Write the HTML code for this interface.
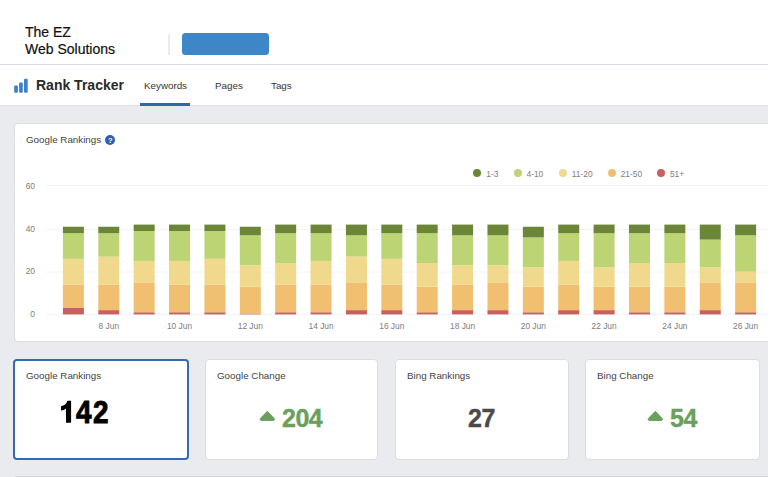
<!DOCTYPE html>
<html><head><meta charset="utf-8">
<style>
*{margin:0;padding:0;box-sizing:border-box}
html,body{width:774px;height:477px;overflow:hidden;background:#fff;font-family:"Liberation Sans",sans-serif}
.abs{position:absolute}
#gray{left:0;top:105px;width:768px;height:372px;background:#eaebee;border-top:1px solid #dfe0e4}
.logo{left:25px;top:24px;font-size:14px;line-height:16.8px;color:#111;-webkit-text-stroke:0.2px #111}
.vdiv{left:168.3px;top:34px;width:1.6px;height:21px;background:#ebebed}
.btn{left:182px;top:33px;width:87px;height:22px;border-radius:3.5px;background:#3d87c9}
.hline{left:0;top:64px;width:768px;height:1px;background:#d9dce3}
.rt{left:36px;top:76px;font-size:14px;font-weight:bold;color:#2a2a2a;line-height:18px}
.tab{top:80px;font-size:9.8px;color:#333;line-height:12px}
.uline{left:140px;top:103px;width:50px;height:3px;background:#2f66b3}
.card{background:#fff;border:1px solid #dcdde1;border-radius:4px}
.ct{font-size:9.8px;color:#444;line-height:12px}
.help{width:10px;height:10px;border-radius:50%;background:#2b61b0;color:#fff;font-size:7.5px;font-weight:bold;line-height:11.5px;text-align:center}
.stat{top:358.5px;height:101.5px}
.sel{border:2px solid #3569b1}
.ax{font-size:8.4px;line-height:10px;color:#7d7d7d;white-space:nowrap}
.dot{width:8px;height:8px;border-radius:50%}
.num{font-weight:bold;line-height:1;-webkit-text-stroke:0.4px currentColor}
</style></head><body>
<div class="abs" id="gray"></div>
<div class="abs logo">The EZ<br>Web Solutions</div>
<div class="abs vdiv"></div>
<div class="abs btn"></div>
<div class="abs hline"></div>

<svg class="abs" style="left:0;top:0" width="40" height="100">
<rect x="14.2" y="85.6" width="3.7" height="7.1" rx="1" fill="#3b82c8"/>
<rect x="19.1" y="82.4" width="3.7" height="10.3" rx="1" fill="#3b82c8"/>
<rect x="24" y="78.8" width="3.7" height="13.9" rx="1" fill="#3b82c8"/>
</svg>
<div class="abs rt">Rank Tracker</div>
<div class="abs tab" style="left:144px">Keywords</div>
<div class="abs tab" style="left:215px">Pages</div>
<div class="abs tab" style="left:271px">Tags</div>
<div class="abs uline"></div>

<div class="abs" style="left:0;top:0;width:768px;height:477px;overflow:hidden"><div class="abs card" style="left:14px;top:123px;width:780px;height:219px"></div></div>
<div class="abs ct" style="left:26px;top:134px">Google Rankings</div>
<div class="abs help" style="left:105.2px;top:135.2px">?</div>

<svg class="abs" id="chart" style="left:0;top:0" width="774" height="477">
<line x1="46" y1="185.50" x2="768" y2="185.50" stroke="#f4f4f4" stroke-width="1"/>
<line x1="46" y1="229.50" x2="768" y2="229.50" stroke="#f4f4f4" stroke-width="1"/>
<line x1="46" y1="272.00" x2="768" y2="272.00" stroke="#f4f4f4" stroke-width="1"/>
<line x1="46" y1="314.50" x2="768" y2="314.50" stroke="#f4f4f4" stroke-width="1"/>
<rect x="62.90" y="307.99" width="21" height="6.41" fill="#c95f5f"/>
<rect x="62.90" y="284.47" width="21" height="23.52" fill="#f0c070"/>
<rect x="62.90" y="258.81" width="21" height="25.66" fill="#f0d98c"/>
<rect x="62.90" y="233.16" width="21" height="25.66" fill="#bcd474"/>
<rect x="62.90" y="226.74" width="21" height="6.41" fill="#6b8636"/>
<rect x="98.28" y="310.12" width="21" height="4.28" fill="#c95f5f"/>
<rect x="98.28" y="284.47" width="21" height="25.66" fill="#f0c070"/>
<rect x="98.28" y="256.67" width="21" height="27.79" fill="#f0d98c"/>
<rect x="98.28" y="233.16" width="21" height="23.52" fill="#bcd474"/>
<rect x="98.28" y="226.74" width="21" height="6.41" fill="#6b8636"/>
<rect x="133.66" y="312.26" width="21" height="2.14" fill="#c95f5f"/>
<rect x="133.66" y="282.33" width="21" height="29.93" fill="#f0c070"/>
<rect x="133.66" y="260.95" width="21" height="21.38" fill="#f0d98c"/>
<rect x="133.66" y="231.02" width="21" height="29.93" fill="#bcd474"/>
<rect x="133.66" y="224.60" width="21" height="6.41" fill="#6b8636"/>
<rect x="169.04" y="312.26" width="21" height="2.14" fill="#c95f5f"/>
<rect x="169.04" y="284.47" width="21" height="27.79" fill="#f0c070"/>
<rect x="169.04" y="260.95" width="21" height="23.52" fill="#f0d98c"/>
<rect x="169.04" y="231.02" width="21" height="29.93" fill="#bcd474"/>
<rect x="169.04" y="224.60" width="21" height="6.41" fill="#6b8636"/>
<rect x="204.42" y="312.26" width="21" height="2.14" fill="#c95f5f"/>
<rect x="204.42" y="284.47" width="21" height="27.79" fill="#f0c070"/>
<rect x="204.42" y="258.81" width="21" height="25.66" fill="#f0d98c"/>
<rect x="204.42" y="231.02" width="21" height="27.79" fill="#bcd474"/>
<rect x="204.42" y="224.60" width="21" height="6.41" fill="#6b8636"/>
<rect x="239.80" y="313.54" width="21" height="0.86" fill="#c95f5f"/>
<rect x="239.80" y="286.61" width="21" height="26.94" fill="#f0c070"/>
<rect x="239.80" y="265.23" width="21" height="21.38" fill="#f0d98c"/>
<rect x="239.80" y="235.29" width="21" height="29.93" fill="#bcd474"/>
<rect x="239.80" y="226.74" width="21" height="8.55" fill="#6b8636"/>
<rect x="275.18" y="312.26" width="21" height="2.14" fill="#c95f5f"/>
<rect x="275.18" y="284.47" width="21" height="27.79" fill="#f0c070"/>
<rect x="275.18" y="263.09" width="21" height="21.38" fill="#f0d98c"/>
<rect x="275.18" y="233.16" width="21" height="29.93" fill="#bcd474"/>
<rect x="275.18" y="224.60" width="21" height="8.55" fill="#6b8636"/>
<rect x="310.56" y="312.26" width="21" height="2.14" fill="#c95f5f"/>
<rect x="310.56" y="284.47" width="21" height="27.79" fill="#f0c070"/>
<rect x="310.56" y="260.95" width="21" height="23.52" fill="#f0d98c"/>
<rect x="310.56" y="233.16" width="21" height="27.79" fill="#bcd474"/>
<rect x="310.56" y="224.60" width="21" height="8.55" fill="#6b8636"/>
<rect x="345.94" y="310.12" width="21" height="4.28" fill="#c95f5f"/>
<rect x="345.94" y="282.33" width="21" height="27.79" fill="#f0c070"/>
<rect x="345.94" y="256.67" width="21" height="25.66" fill="#f0d98c"/>
<rect x="345.94" y="235.29" width="21" height="21.38" fill="#bcd474"/>
<rect x="345.94" y="224.60" width="21" height="10.69" fill="#6b8636"/>
<rect x="381.32" y="310.12" width="21" height="4.28" fill="#c95f5f"/>
<rect x="381.32" y="284.47" width="21" height="25.66" fill="#f0c070"/>
<rect x="381.32" y="258.81" width="21" height="25.66" fill="#f0d98c"/>
<rect x="381.32" y="233.16" width="21" height="25.66" fill="#bcd474"/>
<rect x="381.32" y="224.60" width="21" height="8.55" fill="#6b8636"/>
<rect x="416.70" y="312.26" width="21" height="2.14" fill="#c95f5f"/>
<rect x="416.70" y="286.61" width="21" height="25.66" fill="#f0c070"/>
<rect x="416.70" y="263.09" width="21" height="23.52" fill="#f0d98c"/>
<rect x="416.70" y="233.16" width="21" height="29.93" fill="#bcd474"/>
<rect x="416.70" y="224.60" width="21" height="8.55" fill="#6b8636"/>
<rect x="452.08" y="310.12" width="21" height="4.28" fill="#c95f5f"/>
<rect x="452.08" y="284.47" width="21" height="25.66" fill="#f0c070"/>
<rect x="452.08" y="265.23" width="21" height="19.24" fill="#f0d98c"/>
<rect x="452.08" y="235.29" width="21" height="29.93" fill="#bcd474"/>
<rect x="452.08" y="224.60" width="21" height="10.69" fill="#6b8636"/>
<rect x="487.46" y="310.12" width="21" height="4.28" fill="#c95f5f"/>
<rect x="487.46" y="282.33" width="21" height="27.79" fill="#f0c070"/>
<rect x="487.46" y="265.23" width="21" height="17.10" fill="#f0d98c"/>
<rect x="487.46" y="235.29" width="21" height="29.93" fill="#bcd474"/>
<rect x="487.46" y="224.60" width="21" height="10.69" fill="#6b8636"/>
<rect x="522.84" y="312.26" width="21" height="2.14" fill="#c95f5f"/>
<rect x="522.84" y="286.61" width="21" height="25.66" fill="#f0c070"/>
<rect x="522.84" y="267.36" width="21" height="19.24" fill="#f0d98c"/>
<rect x="522.84" y="237.43" width="21" height="29.93" fill="#bcd474"/>
<rect x="522.84" y="226.74" width="21" height="10.69" fill="#6b8636"/>
<rect x="558.22" y="310.12" width="21" height="4.28" fill="#c95f5f"/>
<rect x="558.22" y="284.47" width="21" height="25.66" fill="#f0c070"/>
<rect x="558.22" y="260.95" width="21" height="23.52" fill="#f0d98c"/>
<rect x="558.22" y="233.16" width="21" height="27.79" fill="#bcd474"/>
<rect x="558.22" y="224.60" width="21" height="8.55" fill="#6b8636"/>
<rect x="593.60" y="310.12" width="21" height="4.28" fill="#c95f5f"/>
<rect x="593.60" y="286.61" width="21" height="23.52" fill="#f0c070"/>
<rect x="593.60" y="267.36" width="21" height="19.24" fill="#f0d98c"/>
<rect x="593.60" y="233.16" width="21" height="34.21" fill="#bcd474"/>
<rect x="593.60" y="224.60" width="21" height="8.55" fill="#6b8636"/>
<rect x="628.98" y="312.26" width="21" height="2.14" fill="#c95f5f"/>
<rect x="628.98" y="286.61" width="21" height="25.66" fill="#f0c070"/>
<rect x="628.98" y="263.09" width="21" height="23.52" fill="#f0d98c"/>
<rect x="628.98" y="233.16" width="21" height="29.93" fill="#bcd474"/>
<rect x="628.98" y="224.60" width="21" height="8.55" fill="#6b8636"/>
<rect x="664.36" y="312.26" width="21" height="2.14" fill="#c95f5f"/>
<rect x="664.36" y="286.61" width="21" height="25.66" fill="#f0c070"/>
<rect x="664.36" y="263.09" width="21" height="23.52" fill="#f0d98c"/>
<rect x="664.36" y="233.16" width="21" height="29.93" fill="#bcd474"/>
<rect x="664.36" y="224.60" width="21" height="8.55" fill="#6b8636"/>
<rect x="699.74" y="310.12" width="21" height="4.28" fill="#c95f5f"/>
<rect x="699.74" y="282.33" width="21" height="27.79" fill="#f0c070"/>
<rect x="699.74" y="267.36" width="21" height="14.97" fill="#f0d98c"/>
<rect x="699.74" y="239.57" width="21" height="27.79" fill="#bcd474"/>
<rect x="699.74" y="224.60" width="21" height="14.97" fill="#6b8636"/>
<rect x="735.12" y="312.26" width="21" height="2.14" fill="#c95f5f"/>
<rect x="735.12" y="282.33" width="21" height="29.93" fill="#f0c070"/>
<rect x="735.12" y="271.64" width="21" height="10.69" fill="#f0d98c"/>
<rect x="735.12" y="235.29" width="21" height="36.35" fill="#bcd474"/>
<rect x="735.12" y="224.60" width="21" height="10.69" fill="#6b8636"/>

</svg>

<div class="abs ax" style="left:0;width:35px;text-align:right;top:180.7px">60</div>
<div class="abs ax" style="left:0;width:35px;text-align:right;top:223.6px">40</div>
<div class="abs ax" style="left:0;width:35px;text-align:right;top:266.4px">20</div>
<div class="abs ax" style="left:0;width:35px;text-align:right;top:309.3px">0</div>
<div class="abs ax" style="left:78.8px;width:60px;text-align:center;top:321px">8 Jun</div>
<div class="abs ax" style="left:149.5px;width:60px;text-align:center;top:321px">10 Jun</div>
<div class="abs ax" style="left:220.3px;width:60px;text-align:center;top:321px">12 Jun</div>
<div class="abs ax" style="left:291.1px;width:60px;text-align:center;top:321px">14 Jun</div>
<div class="abs ax" style="left:361.8px;width:60px;text-align:center;top:321px">16 Jun</div>
<div class="abs ax" style="left:432.6px;width:60px;text-align:center;top:321px">18 Jun</div>
<div class="abs ax" style="left:503.3px;width:60px;text-align:center;top:321px">20 Jun</div>
<div class="abs ax" style="left:574.1px;width:60px;text-align:center;top:321px">22 Jun</div>
<div class="abs ax" style="left:644.9px;width:60px;text-align:center;top:321px">24 Jun</div>
<div class="abs ax" style="left:715.6px;width:60px;text-align:center;top:321px">26 Jun</div>
<div class="abs dot" style="left:473.3px;top:169px;background:#6b8636"></div>
<div class="abs ax" style="left:486.3px;top:169px">1-3</div>
<div class="abs dot" style="left:513.5px;top:169px;background:#bcd474"></div>
<div class="abs ax" style="left:526.5px;top:169px">4-10</div>
<div class="abs dot" style="left:558.8px;top:169px;background:#f0d98c"></div>
<div class="abs ax" style="left:571.8px;top:169px">11-20</div>
<div class="abs dot" style="left:607.7px;top:169px;background:#f0c070"></div>
<div class="abs ax" style="left:620.7px;top:169px">21-50</div>
<div class="abs dot" style="left:656.9px;top:169px;background:#c95f5f"></div>
<div class="abs ax" style="left:669.9px;top:169px">51+</div>
<div class="abs card stat sel" style="left:13px;width:175.5px"></div>
<div class="abs card stat" style="left:204.5px;width:173.5px"></div>
<div class="abs card stat" style="left:394.5px;width:174px"></div>
<div class="abs card stat" style="left:584.5px;width:175px"></div>
<div class="abs" style="left:15px;top:476px;width:753px;height:1px;background:#d5d6da"></div>

<div class="abs ct" style="left:26px;top:369.5px">Google Rankings</div>
<div class="abs ct" style="left:217px;top:369.5px">Google Change</div>
<div class="abs ct" style="left:407px;top:369.5px">Bing Rankings</div>
<div class="abs ct" style="left:597px;top:369.5px">Bing Change</div>

<svg class="abs" style="left:0;top:0" width="120" height="477"><path d="M71.1 400.8 L71.1 422.8 L66 422.8 L66 408.4 Q64.2 410.2 61 410.4 L61 406.2 Q64.6 405.8 66.3 403.2 Q67 402 67.3 400.8 Z" fill="#000"/></svg>
<div class="abs num" style="left:76px;top:397px;font-size:31px;color:#000;-webkit-text-stroke:0.9px #000;transform:scaleX(0.9);transform-origin:0 0">4</div>
<div class="abs num" style="left:92.5px;top:397px;font-size:31px;color:#000;-webkit-text-stroke:0.9px #000;transform:scaleX(0.9);transform-origin:0 0">2</div>
<div class="abs num" style="left:282px;top:406px;font-size:25px;letter-spacing:-0.5px;color:#6a9f5c">204</div>
<div class="abs num" style="left:468px;top:406px;font-size:25px;letter-spacing:-0.5px;color:#4a4a4a">27</div>
<div class="abs num" style="left:670px;top:406px;font-size:25px;letter-spacing:-0.5px;color:#6a9f5c">54</div>
<svg class="abs" style="left:259px;top:410px" width="17" height="12"><path d="M8.3 1.3 L15.2 8.6 Q15.9 9.5 14.8 10.4 L1.8 10.4 Q0.7 9.5 1.4 8.6 Z" fill="#6a9f5c" stroke="#6a9f5c" stroke-width="1" stroke-linejoin="round"/></svg>
<svg class="abs" style="left:647px;top:410px" width="17" height="12"><path d="M8.3 1.3 L15.2 8.6 Q15.9 9.5 14.8 10.4 L1.8 10.4 Q0.7 9.5 1.4 8.6 Z" fill="#6a9f5c" stroke="#6a9f5c" stroke-width="1" stroke-linejoin="round"/></svg>
</body></html>
